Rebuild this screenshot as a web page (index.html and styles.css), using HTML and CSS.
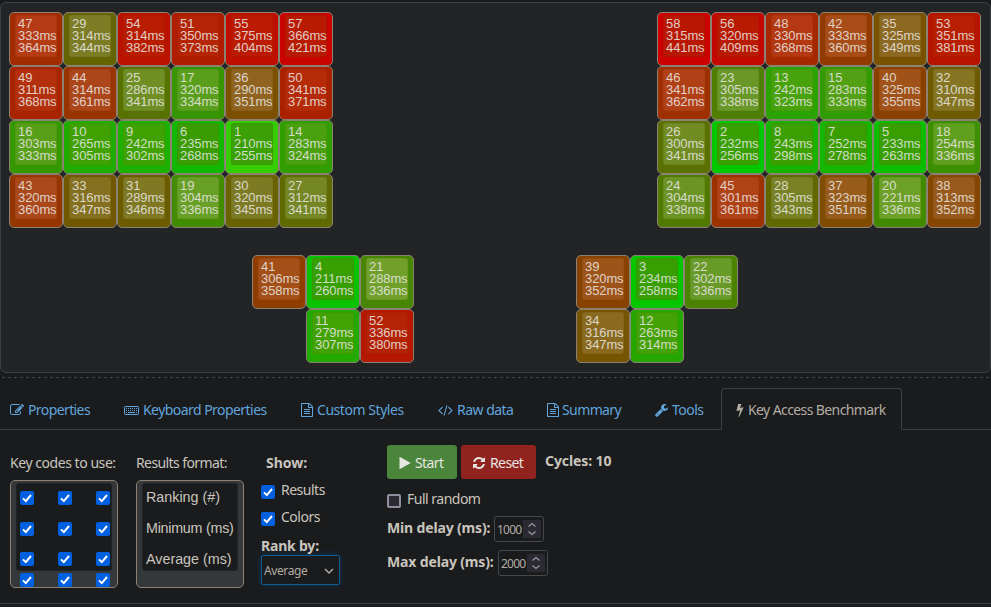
FILE: index.html
```html
<!DOCTYPE html>
<html lang="en">
<head>
<meta charset="utf-8">
<title>Keyboard Layout Editor</title>
<link rel="stylesheet" href="styles.css">
</head>
<body>
<svg class="defs" width="0" height="0" aria-hidden="true">
  <symbol id="file" viewBox="128 0 1536 1792"><path d="M1596 380q28 28 48 76t20 88v1152q0 40-28 68t-68 28h-1344q-40 0-68-28t-28-68v-1600q0-40 28-68t68-28h896q40 0 88 20t76 48zm-444-244v376h376q-10-29-22-41l-313-313q-12-12-41-22zm384 1528v-1024h-416q-40 0-68-28t-28-68v-416h-768v1536h1280zm-1024-864q0-14 9-23t23-9h704q14 0 23 9t9 23v64q0 14-9 23t-23 9h-704q-14 0-23-9t-9-23v-64zm736 224q14 0 23 9t9 23v64q0 14-9 23t-23 9h-704q-14 0-23-9t-9-23v-64q0-14 9-23t23-9h704zm0 256q14 0 23 9t9 23v64q0 14-9 23t-23 9h-704q-14 0-23-9t-9-23v-64q0-14 9-23t23-9h704z"/></symbol>
  <symbol id="check" viewBox="0 0 14 14"><rect width="14" height="14" rx="2" fill="#0060df"/><path d="M3 7.4l2.8 2.7L11 4" fill="none" stroke="#fff" stroke-width="2"/></symbol>
</svg>

<main class="board">
  <div class="halves">
    <div class="keys" data-block="left"></div>
    <div class="keys" data-block="right"></div>
  </div>
  <div class="thumbs">
    <div class="keys thumb thumb-left" data-block="thumbLeft"></div>
    <div class="keys thumb" data-block="thumbRight"></div>
  </div>
</main>
<div class="divider"></div>

<nav class="tabs">
  <a class="tab t-props"><svg width="14" height="14" viewBox="0 0 1792 1792"><path d="M888 1184l116-116-152-152-116 116v56h96v96h56zm440-720q-16-16-33 1l-350 350q-17 17-1 33t33-1l350-350q17-17 1-33zm80 594v190q0 119-84.500 203.500t-203.500 84.500h-832q-119 0-203.500-84.500t-84.500-203.500v-832q0-119 84.500-203.500t203.500-84.500h832q63 0 117 25 15 7 18 23 3 17-9 29l-49 49q-14 14-32 8-23-6-45-6h-832q-66 0-113 47t-47 113v832q0 66 47 113t113 47h832q66 0 113-47t47-113v-126q0-13 9-22l64-64q15-15 35-7t20 29zm-96-738l288 288-672 672h-288v-288zm444 132l-92 92-288-288 92-92q28-28 68-28t68 28l152 152q28 28 28 68t-28 68z"/></svg><span>Properties</span></a>
  <a class="tab t-kb"><svg width="15" height="14" viewBox="0 0 15 14"><rect x=".5" y="3.500" width="14" height="8" rx=".8" fill="none" stroke="currentColor"/><path d="M2 5.500h11M2 7.500h11" fill="none" stroke="currentColor" stroke-dasharray="1 1"/><path d="M2 9.500h1M4 9.500h7M12 9.500h1" stroke="currentColor"/></svg><span>Keyboard Properties</span></a>
  <a class="tab t-styles"><svg width="12" height="14"><use href="#file"/></svg><span>Custom Styles</span></a>
  <a class="tab t-raw"><svg width="15" height="14" viewBox="64 0 1920 1792"><path d="M681 1399l-50 50q-10 10-23 10t-23-10l-466-466q-10-10-10-23t10-23l466-466q10-10 23-10t23 10l50 50q10 10 10 23t-10 23l-393 393 393 393q10 10 10 23t-10 23zm591-1067l-373 1291q-4 13-15.500 19.500t-23.500 2.500l-62-17q-13-4-19.500-15.500t-2.500-24.500l373-1291q4-13 15.500-19.500t23.500-2.500l62 17q13 4 19.500 15.500t2.500 24.500zm657 651l-466 466q-10 10-23 10t-23-10l-50-50q-10-10-10-23t10-23l393-393-393-393q-10-10-10-23t10-23l50-50q10-10 23-10t23 10l466 466q10 10 10 23t-10 23z"/></svg><span>Raw data</span></a>
  <a class="tab t-sum"><svg width="12" height="14"><use href="#file"/></svg><span>Summary</span></a>
  <a class="tab t-tools"><svg width="13" height="14" viewBox="64 0 1664 1792"><path d="M448 1472q0-26-19-45t-45-19-45 19-19 45 19 45 45 19 45-19 19-45zm644-420l-682 682q-37 37-90 37-52 0-91-37l-106-108q-38-36-38-90 0-53 38-91l681-681q39 98 114.500 173.500t173.500 114.500zm634-435q0 39-23 106-47 134-164.500 217.500t-258.500 83.500q-185 0-316.500-131.500t-131.500-316.500 131.500-316.500 316.500-131.500q58 0 121.500 16.500t107.500 46.500q16 11 16 28t-16 28l-293 169v224l193 107q5-3 79-48.500t135.500-81 70.500-35.500q15 0 23.500 10t8.500 25z"/></svg><span>Tools</span></a>
  <a class="tab active"><svg width="8" height="14" viewBox="416 0 960 1792"><path d="M1333 566q18 20 7 44l-540 1157q-13 25-42 25-4 0-14-2-17-5-25.500-19t-4.500-30l197-808-406 101q-4 1-12 1-18 0-31-11-18-15-13-39l201-825q4-16 17-26t30-10h328q19 0 32 12.500t13 29.500q0 8-5 18l-171 463 396-98q8-2 12-2 19 0 34 15z"/></svg><span>Key Access Benchmark</span></a>
</nav>

<section class="panel">
  <div class="col codes">
    <div class="label"><span class="codes-label">Key codes to use:</span></div>
    <div class="cap">
      <div class="cap-top"></div>
      <div class="checks"></div>
    </div>
  </div>
  <div class="col format">
    <div class="label"><span class="format-label">Results format:</span></div>
    <div class="cap">
      <div class="cap-top legend"><span>Ranking (#)</span><span>Minimum (ms)</span><span>Average (ms)</span></div>
    </div>
  </div>
  <div class="col show">
    <div class="label show-label"><b>Show:</b></div>
    <label class="option"><svg width="14" height="14"><use href="#check"/></svg><span>Results</span></label>
    <label class="option"><svg width="14" height="14"><use href="#check"/></svg><span>Colors</span></label>
    <div class="rank"><b>Rank by:</b></div>
    <div class="select"><span>Average</span><svg width="10" height="6" viewBox="0 0 10 6"><path d="M1 1l4 4 4-4" fill="none" stroke="#b6b0a6" stroke-width="1.400"/></svg></div>
  </div>
  <div class="col run">
    <div class="buttons">
      <button class="btn start"><svg width="12" height="14" viewBox="192 0 1408 1792"><path d="M1576 927l-1328 738q-23 13-39.500 3t-16.500-36v-1472q0-26 16.500-36t39.500 3l1328 738q23 13 23 31t-23 31z"/></svg><span>Start</span></button>
      <button class="btn reset"><svg width="12" height="14" viewBox="128 0 1536 1792"><path d="M1639 1056q0 5-1 7-64 268-268 434.500t-478 166.500q-146 0-282.500-55t-243.500-157l-129 129q-19 19-45 19t-45-19-19-45v-448q0-26 19-45t45-19h448q26 0 45 19t19 45-19 45l-137 137q71 66 161 102t187 36q134 0 250-65t186-179q11-17 53-117 8-23 30-23h192q13 0 22.500 9.500t9.500 22.500zm25-800v448q0 26-19 45t-45 19h-448q-26 0-45-19t-19-45 19-45l138-138q-148-137-349-137-134 0-250 65t-186 179q-11 17-53 117-8 23-30 23h-199q-13 0-22.500-9.500t-9.500-22.500v-7q65-268 270-434.500t480-166.500q146 0 284 55.500t245 156.500l130-129q19-19 45-19t45 19 19 45z"/></svg><span>Reset</span></button>
      <b class="cycles">Cycles: 10</b>
    </div>
    <label class="option random"><i class="unchecked"></i><span>Full random</span></label>
    <div class="delay"><b class="min">Min delay (ms):</b><div class="number"><span>1000</span><i class="spin"><svg width="10" height="14" viewBox="0 0 10 14"><path d="M1.500 4.500L5 1.500l3.500 3M1.500 9.500l3.500 3 3.500-3"/></svg></i></div></div>
    <div class="delay"><b class="max">Max delay (ms):</b><div class="number"><span>2000</span><i class="spin"><svg width="10" height="14" viewBox="0 0 10 14"><path d="M1.500 4.500L5 1.500l3.500 3M1.500 9.500l3.500 3 3.500-3"/></svg></i></div></div>
  </div>
</section>
<script src="keys.js"></script>
</body>
</html>
```
FILE: styles.css
```css
* { box-sizing: border-box; }
body { margin: 0; padding-top: 2px; height: 607px; overflow: hidden; background: #1a1b1d; color: #c9c5bd; font: 14px/20px "Noto Sans", sans-serif; }
svg { display: block; flex: none; fill: currentColor; }
.defs { position: absolute; }
.board { height: 371px; padding: 9px 9px 0 8px; border: 1px solid #3d4042; border-radius: 6px; background: #232426; }
.halves { display: flex; justify-content: space-between; }
.keys { display: grid; grid-template-columns: repeat(6, 54px); grid-auto-rows: 54px; }
.thumbs { display: flex; gap: 162px; margin: 27px 0 0 243px; }
.thumb { grid-template-columns: repeat(3, 54px); }
.thumb-left .key:nth-child(4) { grid-column: 2; }
.key { padding: 2px 5px; border: 1px solid #8c8273; border-radius: 5px; color: #e8e6e3e0; font: 13px/12px "Liberation Sans", sans-serif; }
.keytop { width: 42px; height: 42px; padding: 2px 0 0 2px; border: 1px solid #0000000c; border-radius: 3px; white-space: nowrap; letter-spacing: -.1px; }
.keytop span { display: block; }
.divider { height: 1px; margin: 4px 0 10px 2px; background: repeating-linear-gradient(90deg, #434648 0 3px, transparent 3px 6px); }

.tabs { display: flex; height: 42px; border-bottom: 1px solid #3d4042; }
.tab { display: flex; align-items: center; gap: 4px; height: 42px; padding: 1px 0 0 10px; color: #60a5dc; white-space: nowrap; letter-spacing: -.52px; }
.t-props { width: 114px; letter-spacing: -.6px; }
.t-kb { width: 177px; letter-spacing: -.55px; }
.t-styles { width: 137px; letter-spacing: -.45px; }
.t-raw { width: 109px; }
.t-sum { width: 108px; gap: 3px; letter-spacing: -.6px; padding-left: 10px; }
.t-tools { width: 76px; }
.active { width: 181px; padding: 1px 0 0 14px; border: 1px solid #3d4042; border-bottom-color: #1a1b1d; border-radius: 4px 4px 0 0; background: #1a1b1d; color: #b2aca2; letter-spacing: -.6px; }

.panel { display: flex; height: 174px; padding: 15px 0 0 10px; border-bottom: 1px solid #3d4042; white-space: nowrap; }
.label { height: 35px; padding-top: 8px; }
.codes { width: 108px; margin-right: 18px; }
.codes-label { letter-spacing: -.45px; }
.format { width: 108px; margin-right: 17px; }
.format-label { letter-spacing: -.6px; }
.cap { position: relative; height: 108px; padding: 2px 5px; overflow: hidden; border: 1px solid #8c8273; border-radius: 5px; background: #34383a; }
.cap-top { height: 88px; border: 1px solid #202325; border-radius: 3px; background: #1a1b1d; }
.checks { position: absolute; top: 10px; left: 9px; display: grid; grid-template-columns: repeat(3, 38px); grid-template-rows: 31px 30px 21px 14px; }
.legend { padding: 0 0 0 3px; font: 14.300px/31px "Liberation Sans", sans-serif; }
.legend span { display: block; height: 31px; line-height: 26px; }
.legend span:nth-child(2) { letter-spacing: -.25px; }
.show { width: 79px; margin-right: 47px; }
.show-label { padding-left: 5px; }
.option { display: flex; height: 27px; gap: 6px; letter-spacing: -.5px; }
.option span { line-height: 20px; }
.show .option svg { margin-top: 5px; }
.rank { height: 21px; padding-top: 2px; letter-spacing: -.2px; }
.select { display: flex; align-items: center; justify-content: space-between; height: 30px; padding: 1px 5px 0 2px; border: 1px solid #0e5c94; border-radius: 2px; box-shadow: 0 0 7px #0b5c9670; font-size: 12px; letter-spacing: -.4px; color: #b2aca2; }
.buttons { display: flex; gap: 4px; height: 34px; }
.btn { display: flex; align-items: center; gap: 4px; width: 70px; height: 34px; padding: 2px 0 0 12px; border: 0; border-radius: 3px; background: #4b853b; color: #e8e6e3; font: inherit; letter-spacing: -.6px; }
.reset { width: 75px; gap: 5px; background: #91231f; }
.cycles { margin: 6px 0 0 5px; letter-spacing: -.1px; }
.random { height: 36px; padding-top: 10px; }
.unchecked { width: 14px; height: 14px; margin-top: 5px; border: 2px solid #8f8f9d; border-radius: 2px; background: #2b2a33; }
.delay { display: flex; height: 34px; }
.delay b { padding-top: 3px; letter-spacing: -.15px; }
.min { width: 107px; }
.max { width: 111px; }
.number { display: flex; align-items: center; width: 50px; height: 26px; margin-top: 1px; padding: 0 2px; border: 1px solid #44484a; border-radius: 3px; color: #b2aca2; font-size: 12px; letter-spacing: -.8px; }
.number span { width: 26px; padding: 1px 0 0 0; }
.spin { display: grid; place-items: center; width: 18px; height: 18px; background: #2b2a33; }
.spin path { fill: none; stroke: #9795a0; stroke-width: 1.300; }
```
FILE: keys.js
```js
// Each entry: rank, minimum ms, average ms, key colour, keytop colour.
const blocks = {
  left: `47 333 364 a32b00 b53b14|29 314 344 646400 7c7c25|54 314 382 bb1100 b81d02|51 350 373 b01c00 b52505|55 375 404 bf0d00 ba1b02|57 366 421 c80300 b81a02
|49 311 368 a82400 b4300c|44 314 361 983400 ac461a|25 286 341 587200 6f8f25|17 320 334 379600 5a9f1c|36 290 351 7c5000 906420|50 341 371 aa2100 b52b08
|16 303 333 359800 589f18|10 265 305 20ac00 3fa202|9 242 302 1cb000 3fa202|6 235 268 12b800 389c02|1 210 255 35cc00 3aa005|14 283 324 319e00 4ba010
|43 320 360 953500 aa4819|33 316 347 705800 857020|31 289 346 6b5c00 807822|19 304 336 428c00 68a026|30 320 345 686200 7d7a24|27 312 341 5f6b00 748724`,
  right: `58 315 441 cc0000 b81802|56 320 409 c20800 b81b02|48 330 368 a52800 b43812|42 333 360 903a00 a84c18|35 325 349 795200 8c6820|53 351 381 b61400 b81f02
|46 341 362 9e2f00 b24016|23 305 338 4f7e00 6a9828|13 242 323 2aa300 48a20c|15 283 333 309c00 52a014|40 325 355 8a4000 a05218|32 310 347 6e5a00 857522
|26 300 341 5a7000 728c24|2 232 256 02c800 38a002|8 243 298 1ab200 3ca002|7 252 278 16b500 3a9e02|5 233 263 0cbe00 389e02|18 254 336 3c9000 60a01f
|24 304 338 527a00 6c9425|45 301 361 9b3200 b04216|28 305 343 626800 788224|37 323 351 7f4c00 985c1a|20 221 336 428a00 6ca026|38 313 352 844600 985a1c`,
  thumbLeft: `41 306 358 8f3e00 a44f18|4 211 260 0ac200 389f02|21 288 336 478600 70a02a|11 279 307 22aa00 42a204|52 336 380 b41800 b52306`,
  thumbRight: `39 320 352 884200 9e5418|3 234 258 06c600 389f02|22 302 336 4b8200 689a28|34 316 347 765400 8a6a1f|12 263 314 26a600 44a206`
};

for (const el of document.querySelectorAll('[data-block]')) {
  el.innerHTML = blocks[el.dataset.block].split('|').map(entry => {
    const [rank, min, avg, base, top] = entry.trim().split(' ');
    return `<div class="key" style="background:#${base}"><div class="keytop" style="background:#${top}"><span>${rank}</span><span>${min}ms</span><span>${avg}ms</span></div></div>`;
  }).join('');
}

document.querySelector('.checks').innerHTML =
  '<svg width="14" height="14"><use href="#check"/></svg>'.repeat(12);
```
